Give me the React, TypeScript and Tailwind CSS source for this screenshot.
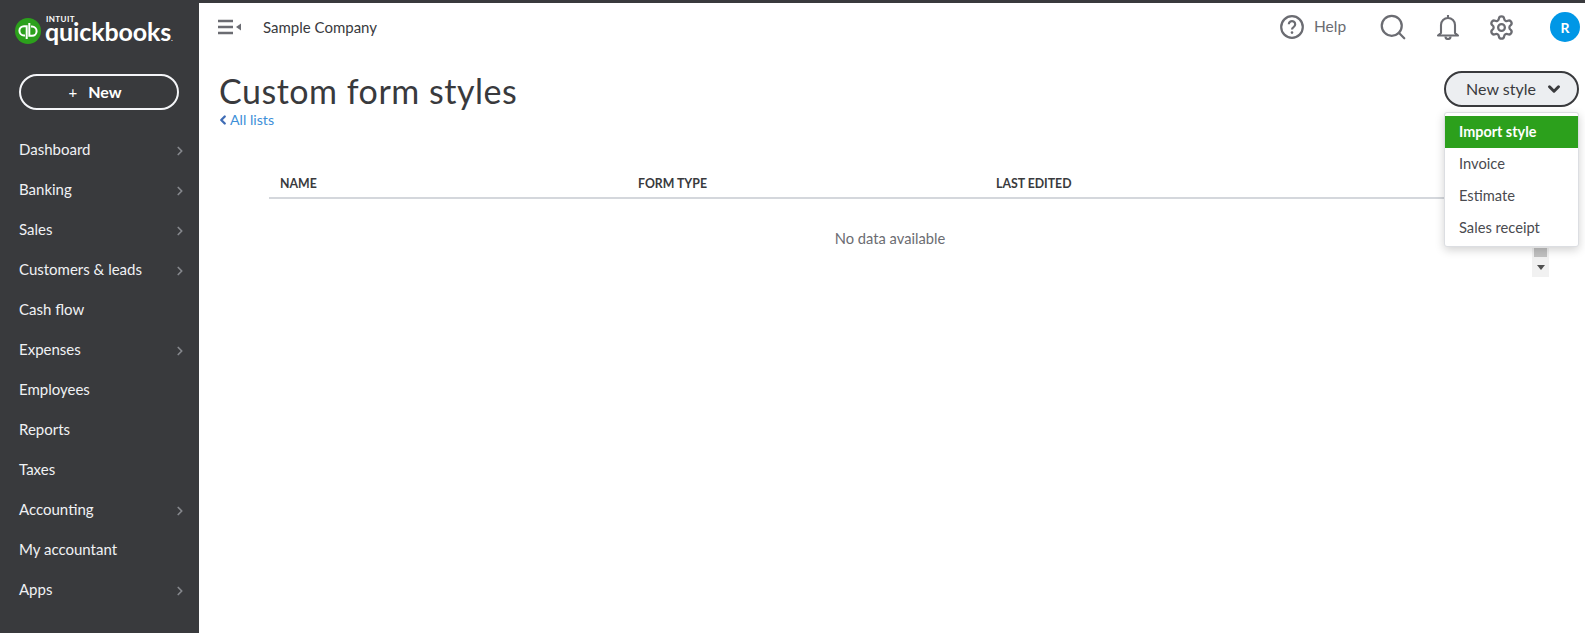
import { ChevronDown, ChevronLeft, ChevronRight, Search, Settings } from 'lucide-react'

const navItems = [
  { label: 'Dashboard', more: true },
  { label: 'Banking', more: true },
  { label: 'Sales', more: true },
  { label: 'Customers & leads', more: true },
  { label: 'Cash flow', more: false },
  { label: 'Expenses', more: true },
  { label: 'Employees', more: false },
  { label: 'Reports', more: false },
  { label: 'Taxes', more: false },
  { label: 'Accounting', more: true },
  { label: 'My accountant', more: false },
  { label: 'Apps', more: true },
]

function QbMark() {
  return (
    <svg width="26" height="26" viewBox="0 0 26 26" className="shrink-0">
      <circle cx="13" cy="13" r="13" fill="#2ca01c" />
      <g fill="none" stroke="#fff" strokeWidth="2">
        <path d="M11.7 21V8.2H9a4.6 4.6 0 0 0 0 9.2h1" />
        <path d="M14.3 5V17.8H17a4.6 4.6 0 0 0 0-9.2h-1" />
      </g>
    </svg>
  )
}

function Sidebar() {
  return (
    <aside className="w-[199px] shrink-0 bg-[#393a3d] text-white flex flex-col">
      <div className="flex items-center pl-[15px] pt-[7px] h-[49px]">
        <QbMark />
        <div className="ml-[4px] relative pt-[6px]">
          <div className="text-[8px] font-bold leading-[8px] tracking-[0.05em] absolute left-[1px] top-[-3px]">INTUIT</div>
          <div className="text-[25px] font-bold leading-[14px] tracking-[-0.005em]">quickbooks<span className="text-[8px] font-normal">.</span></div>
        </div>
      </div>
      <div className="px-[19px] mt-[22px]">
        <button className="w-[160px] h-[36px] rounded-full border-2 border-[#f4f5f8] flex items-center justify-center pr-[8px] text-[16px] font-bold">
          <span className="font-normal mr-[11px] text-[15px]">+</span>New
        </button>
      </div>
      <nav className="mt-[19px] flex flex-col">
        {navItems.map(item => (
          <div key={item.label} className="h-[40px] flex items-center justify-between pl-[19px] pr-[12px] text-[15px] text-[#f0f1f4]">
            <span>{item.label}</span>
            {item.more && <ChevronRight size={14} strokeWidth={3} className="text-[#85878c] mt-[4px]" />}
          </div>
        ))}
      </nav>
    </aside>
  )
}

function TopBar() {
  return (
    <header className="h-[48px] flex items-center pl-[19px] pr-[5px] text-[#6b6c72]">
      <svg width="23" height="16" viewBox="0 0 23 16" className="shrink-0">
        <path d="M0 2h15M0 8h15M0 14h15" stroke="#6b6c72" strokeWidth="2.4" />
        <path d="M23 4.5v7L18 8z" fill="#6b6c72" />
      </svg>
      <span className="ml-[22px] text-[15px] text-[#393a3d]">Sample Company</span>
      <div className="ml-auto flex items-center">
        <svg width="24" height="24" viewBox="0 0 24 24" fill="none" stroke="#6b6c72" className="shrink-0">
          <circle cx="12" cy="12" r="10.8" strokeWidth="2.2" />
          <path d="M8.8 9.3a3.2 3.2 0 1 1 4.8 2.8c-1 .6-1.6 1.2-1.6 2.4" strokeWidth="2.2" />
          <circle cx="12" cy="17.6" r="1.3" fill="#6b6c72" stroke="none" />
        </svg>
        <span className="ml-[10px] text-[15.5px] w-[33px]">Help</span>
        <Search size={30} strokeWidth={1.8} className="ml-[31px]" />
        <svg width="24" height="26" viewBox="0 0 24 26" fill="none" stroke="#6b6c72" strokeWidth="2.1" className="ml-[28px] shrink-0">
          <path d="M12 1v3M5 19V11a7 7 0 0 1 14 0v8l3 2.5H2z" strokeLinejoin="round" />
          <path d="M9.5 22.5a2.5 2.5 0 0 0 5 0" />
        </svg>
        <Settings size={27} strokeWidth={2} className="ml-[28px]" />
        <div className="ml-[35px] w-[30px] h-[30px] rounded-full bg-[#0097e6] text-white text-[14px] font-bold flex items-center justify-center">R</div>
      </div>
    </header>
  )
}

function StyleMenu() {
  return (
    <div className="absolute right-[6px] top-[109px] w-[135px] bg-white border border-[#dcdee2] rounded-[3px] shadow-[0_3px_10px_rgba(0,0,0,0.18)] pt-[3px] pb-[2px] text-[14.7px] text-[#4a4b50]">
      <div className="h-[32px] flex items-center pl-[14px] bg-[#2ca01c] text-white font-bold text-[14.4px]">Import style</div>
      <div className="h-[32px] flex items-center pl-[14px] pb-[2px]">Invoice</div>
      <div className="h-[32px] flex items-center pl-[14px] pb-[2px]">Estimate</div>
      <div className="h-[32px] flex items-center pl-[14px] pb-[2px]">Sales receipt</div>
    </div>
  )
}

export default function App() {
  return (
    <div className="w-[1585px] h-[633px] overflow-hidden bg-white border-t-[3px] border-[#393a3d] flex relative font-['Lato','Noto_Sans',sans-serif]">
      <Sidebar />
      <main className="flex-1 flex flex-col min-w-0">
        <TopBar />
        <div className="flex justify-between pl-[20px] pr-[6px] mt-[19px]">
          <div>
            <h1 className="text-[34px] leading-[41px] tracking-[0.015em] text-[#393a3d]">Custom form styles</h1>
            <a className="flex items-center text-[14.2px] leading-[18px] text-[#3d8fd8]">
              <ChevronLeft size={14} strokeWidth={4} className="text-[#3f6cb5] -ml-[3px]" />
              All lists
            </a>
          </div>
          <button className="w-[135px] h-[36px] mt-[1px] pl-[6px] rounded-full border-2 border-[#393a3d] bg-[#eceef1] text-[#393a3d] text-[16px] flex items-center justify-center">
            New style
            <ChevronDown size={18} strokeWidth={4} className="ml-[9px]" />
          </button>
        </div>
        <div className="ml-[70px] mt-[36px] w-[1242px]">
          <div className="h-[34px] border-b-2 border-[#d4d7dc] flex items-center pl-[11px] pt-[7px] text-[12.3px] font-bold text-[#393a3d]">
            <span className="w-[358px]">NAME</span>
            <span className="w-[358px]">FORM TYPE</span>
            <span>LAST EDITED</span>
          </div>
          <div className="h-[78px] flex items-center justify-center text-[14.7px] text-[#6b6c72]">
            No data available
          </div>
        </div>
      </main>
      {/* leftover scrollbar poking out under the menu */}
      <div className="absolute left-[1532px] top-[245px] w-[17px] h-[29px] bg-[#f1f1f1] flex flex-col items-center">
        <div className="w-[13px] h-[9px] bg-[#c1c1c1]" />
        <svg width="8" height="5" viewBox="0 0 8 5" className="mt-[8px]"><path d="M0 0h8L4 5z" fill="#505050" /></svg>
      </div>
      <StyleMenu />
    </div>
  )
}
